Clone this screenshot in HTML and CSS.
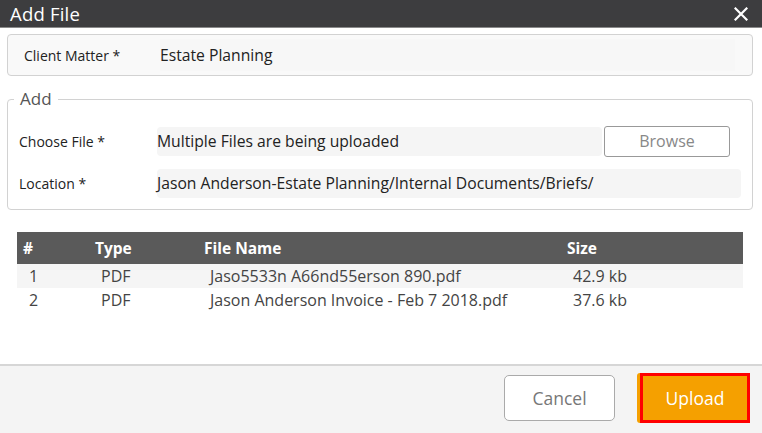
FILE: index.html
```html
<!DOCTYPE html>
<html>
<head>
<meta charset="utf-8">
<link rel="stylesheet" href="styles.css">
</head>
<body>
<div class="dialog">
  <div class="titlebar">
    <span class="title">Add File</span>
    <svg class="close" width="14" height="14" viewBox="0 0 14 14"><path d="M1.5 1.5 L12.5 12.5 M12.5 1.5 L1.5 12.5" stroke="#fff" stroke-width="2.2" stroke-linecap="square"/></svg>
  </div>
  <div class="body">
    <div class="matter">
      <span class="mlabel">Client Matter *</span>
      <span class="mvalue">Estate Planning</span>
    </div>
    <fieldset class="addset">
      <legend>Add</legend>
      <div class="row">
        <span class="flabel">Choose File *</span>
        <span class="field choose">Multiple Files are being uploaded</span>
        <span class="browse">Browse</span>
      </div>
      <div class="row">
        <span class="flabel">Location *</span>
        <span class="field loc">Jason Anderson-Estate Planning/Internal Documents/Briefs/</span>
      </div>
    </fieldset>
    <div class="table">
      <div class="thead">
        <span class="c1">#</span><span class="c2">Type</span><span class="c3">File Name</span><span class="c4">Size</span>
      </div>
      <div class="trow odd">
        <span class="c1">1</span><span class="c2">PDF</span><span class="c3">Jaso5533n A66nd55erson 890.pdf</span><span class="c4">42.9 kb</span>
      </div>
      <div class="trow">
        <span class="c1">2</span><span class="c2">PDF</span><span class="c3">Jason Anderson Invoice - Feb 7 2018.pdf</span><span class="c4">37.6 kb</span>
      </div>
    </div>
  </div>
  <div class="footer">
    <span class="btn cancel">Cancel</span>
    <span class="upwrap"><span class="btn upload">Upload</span></span>
  </div>
</div>
</body>
</html>
```
FILE: styles.css
```css
* { box-sizing: border-box; }
html, body { margin: 0; padding: 0; }
body { width: 762px; height: 433px; overflow: hidden; font-family: "Open Sans", "Noto Sans", sans-serif; color: #222; background: #fff; }
.dialog { width: 762px; height: 433px; display: flex; flex-direction: column; }
.titlebar { height: 28px; background: #3d3d3f; border-bottom: 1px solid #8a8a8a; display: flex; align-items: center; justify-content: space-between; padding: 0 14px 0 10px; }
.title { color: #fff; font-size: 18.5px; letter-spacing: 0.2px; }
.close { display: block; }
.body { flex: 1; padding: 6px 9px 0 7px; }
.matter { height: 42px; border: 1px solid #d2d2d2; border-radius: 4px; background: #f9f9f9; display: flex; align-items: center; padding-left: 16px; }
.mlabel { font-size: 14px; width: 136px; }
.mvalue { font-size: 15.7px; background: #f7f7f7; flex: 0 0 575px; height: 32px; line-height: 32px; }
.addset { margin: 14px 0 0; border: 1px solid #d2d2d2; border-radius: 4px; padding: 18px 11px 10px 11px; height: 120px; }
.addset legend { font-size: 17px; color: #555; padding: 0 6px; margin-left: -5px; line-height: 18px; }
.row { display: flex; align-items: center; height: 30px; margin-bottom: 12px; }
.flabel { font-size: 14px; width: 138px; }
.field { font-size: 15.7px; background: #f5f5f5; border-radius: 4px; height: 29px; line-height: 29px; }
.choose { width: 445px; }
.loc { width: 584px; }
.browse { margin-left: 2px; width: 126px; height: 31px; border: 1px solid #999; border-radius: 3px; background: #fff; color: #888; font-size: 16px; display: flex; align-items: center; justify-content: center; }
.table { margin: 22px 0 0 10px; width: 726px; }
.thead { height: 32px; background: #5a5a5a; color: #fff; font-weight: bold; font-size: 15.5px; display: flex; align-items: center; }
.trow { height: 24px; display: flex; align-items: center; font-size: 16px; color: #444; }
.trow.odd { background: #f5f5f5; }
.c1 { width: 78px; padding-left: 6px; }
.c2 { width: 109px; }
.c3 { width: 363px; }
.trow .c1 { padding-left: 12px; }
.trow .c2, .trow .c3, .trow .c4 { padding-left: 6px; }
.footer { height: 69px; background: #f4f4f4; border-top: 2px solid #d6d6d6; display: flex; align-items: center; justify-content: flex-end; padding: 0 12px 4px 0; gap: 22px; }
.btn { display: flex; align-items: center; justify-content: center; font-size: 17.5px; }
.cancel { width: 111px; height: 46px; background: #fff; border: 1px solid #aaa; border-radius: 5px; color: #777; }
.upwrap { background: #f5a000; padding-left: 3px; border-radius: 3px; }
.upload { width: 110px; height: 50px; background: #f5a000; border: 3px solid #f00; color: #fff; }
```
